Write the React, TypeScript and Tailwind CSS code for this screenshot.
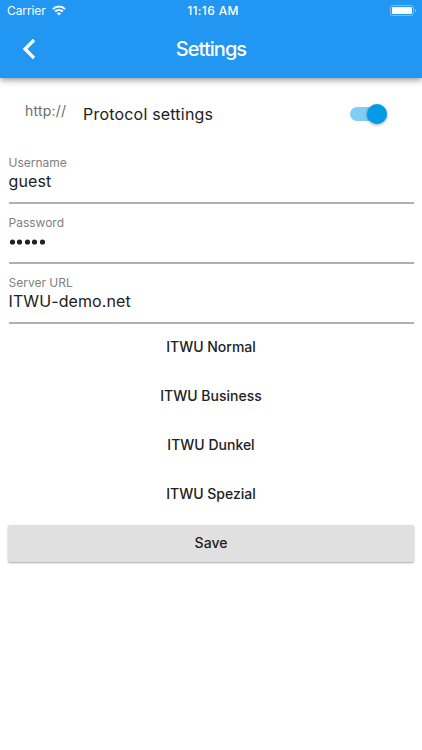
import { useState } from 'react'

const fields = [
    { label: 'Username', value: 'guest' },
    { label: 'Password', value: 'guest', secret: true },
    { label: 'Server URL', value: 'ITWU-demo.net' },
]

const presets = ['ITWU Normal', 'ITWU Business', 'ITWU Dunkel', 'ITWU Spezial']

function WifiIcon() {
    return (
        <svg width="14" height="11" viewBox="0 0 14 11" fill="none" stroke="white" strokeWidth="2" className="-mt-px">
            <path d="M0.9 4.1C4.3 0.7 9.7 0.7 13.1 4.1" />
            <path d="M3.1 6.5C5.3 4.4 8.7 4.4 10.9 6.5" />
            <path d="M7 10.6L4.7 8.3C6 7.1 8 7.1 9.3 8.3Z" fill="white" stroke="none" />
        </svg>
    )
}

function BatteryIcon() {
    return (
        <svg width="27" height="11" viewBox="0 0 27 11" fill="none">
            <rect x="0.5" y="0.5" width="23" height="10" rx="2.4" stroke="white" strokeOpacity="0.4" />
            <rect x="2" y="2" width="20" height="7" rx="1" fill="white" />
            <path d="M25 3.8C26.4 4.3 26.4 6.7 25 7.2Z" fill="white" fillOpacity="0.5" />
        </svg>
    )
}

function MaskDot() {
    return (
        <svg width="7.5" height="6" viewBox="0 0 7.5 6" fill="#212121">
            <circle cx="3.5" cy="3" r="2.6" />
        </svg>
    )
}

function StatusBar() {
    return (
        <div className="grid h-[21px] grid-cols-3 items-center pl-[7px] pr-[5px] text-[12px] leading-[20px]">
            <div className="flex items-center gap-[6px]">
                <span className="tracking-[-0.1px]">Carrier</span>
                <WifiIcon />
            </div>
            <span className="pl-[2px] text-center font-medium tracking-[0.35px]">11:16 AM</span>
            <div className="flex justify-end">
                <BatteryIcon />
            </div>
        </div>
    )
}

export default function App() {
    const [secure, setSecure] = useState(true)

    return (
        <main className="flex h-[750px] w-[422px] flex-col bg-white font-['Inter',sans-serif] text-[#212121]">
            <header className="h-[78px] shrink-0 bg-[#2196f3] text-white shadow-[0_2px_4px_-1px_rgba(0,0,0,0.2),0_4px_5px_rgba(0,0,0,0.14),0_1px_10px_rgba(0,0,0,0.12)]">
                <StatusBar />
                <div className="grid h-[56px] grid-cols-[1fr_auto_1fr] items-center">
                    <button aria-label="Back" className="ml-[22px] w-[14px]">
                        <svg width="14" height="22" viewBox="0 0 14 22" fill="none" stroke="white" strokeWidth="3.2">
                            <path d="M12 2L3 11L12 20" />
                        </svg>
                    </button>
                    <h1 className="text-[20px] font-medium tracking-[-0.95px]">Settings</h1>
                </div>
            </header>

            <section className="flex h-[72px] shrink-0 items-center pl-[25px] pr-[35px]">
                <span className="mb-[7px] w-[58px] text-[14px] tracking-[0.2px] text-[#6b6b6b]">http://</span>
                <span className="flex-1 text-[16px] tracking-[0.2px]">Protocol settings</span>
                <button
                    role="switch"
                    aria-checked={secure}
                    onClick={() => setSecure(!secure)}
                    className={`flex h-[14px] w-[37px] items-center rounded-full ${secure ? 'justify-end bg-[#81cdf4]' : 'justify-start bg-[#9e9e9e]'}`}
                >
                    <span className="h-[20px] w-[20px] shrink-0 rounded-full bg-[#039be5] shadow-[0_1px_3px_rgba(0,0,0,0.4)]" />
                </button>
            </section>

            <section className="px-[8.5px]">
                {fields.map((field) => (
                    <div key={field.label} className="mb-[6px] flex h-[54px] flex-col border-b-2 border-[#b0b0b0] pt-[5px]">
                        <label className="text-[12px] leading-[15px] text-[#808080]">{field.label}</label>
                        {field.secret ? (
                            <div className="flex h-[22px] items-center pt-[2px]">
                                {field.value.split('').map((_, i) => (
                                    <MaskDot key={i} />
                                ))}
                            </div>
                        ) : (
                            <span className="text-[16px] leading-[22px] tracking-[0.1px]">{field.value}</span>
                        )}
                    </div>
                ))}
            </section>

            <section className="-mt-[8px] flex flex-col px-2">
                {presets.map((preset) => (
                    <button key={preset} className="h-[49px] text-[14px] font-medium">
                        {preset}
                    </button>
                ))}
                <button className="mt-[7px] h-[37px] rounded-[2px] bg-[#e0e0e0] pb-[2px] text-[14px] font-medium shadow-[0_1px_2px_rgba(0,0,0,0.35)]">
                    Save
                </button>
            </section>
        </main>
    )
}
